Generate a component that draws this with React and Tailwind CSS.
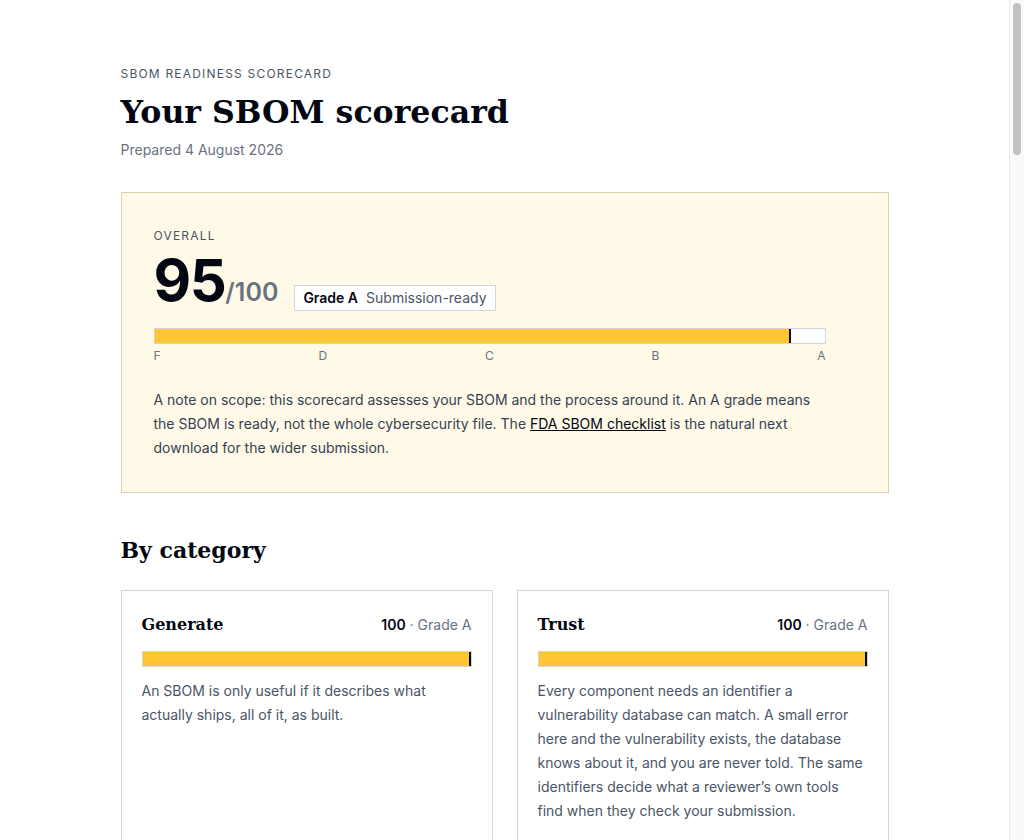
import React from 'react';

const serif = { fontFamily: '"DejaVu Serif", "Liberation Serif", serif' };

const categories = [
  {
    name: 'Generate',
    score: 100,
    grade: 'A',
    text: 'An SBOM is only useful if it describes what actually ships, all of it, as built.',
    checks: ['Generated from the build, not by hand', 'Covers every shipped artefact', 'Regenerated on each release'],
  },
  {
    name: 'Trust',
    score: 100,
    grade: 'A',
    text: 'Every component needs an identifier a vulnerability database can match. A small error here and the vulnerability exists, the database knows about it, and you are never told. The same identifiers decide what a reviewer\u2019s own tools find when they check your submission.',
    checks: ['PURL or CPE on every component', 'Supplier and version recorded', 'Hashes for shipped binaries'],
  },
  {
    name: 'Share',
    score: 90,
    grade: 'A',
    text: 'The SBOM has to reach the people who need it, in a format their tools can read, without a week of back and forth.',
    checks: ['SPDX or CycloneDX output', 'Machine-readable copy in the submission', 'Named owner for requests'],
  },
  {
    name: 'Maintain',
    score: 85,
    grade: 'B',
    text: 'A device stays on the market for years. The SBOM has to keep pace with patches, end-of-support dates and new vulnerabilities.',
    checks: ['Support status per component', 'Monitoring against known vulnerabilities', 'Review cadence documented'],
  },
];

const answers = [
  ['How is your SBOM produced?', 'Automatically, as part of the release build.', 'Generate'],
  ['Does it include firmware and third-party binaries?', 'Yes, every artefact that ships on the device.', 'Generate'],
  ['Is it regenerated when the software changes?', 'On every tagged release.', 'Generate'],
  ['Do components carry PURL or CPE identifiers?', 'Yes, for all components.', 'Trust'],
  ['Are supplier names and versions recorded?', 'Yes, checked against the build manifest.', 'Trust'],
  ['Are hashes included for shipped binaries?', 'SHA-256 for every binary.', 'Trust'],
  ['Which format do you deliver in?', 'CycloneDX JSON, with a human-readable export.', 'Share'],
  ['Who answers questions about the SBOM?', 'A named product security lead.', 'Share'],
  ['Is support status recorded per component?', 'For most components; some dates are missing.', 'Maintain'],
  ['Do you monitor components for new vulnerabilities?', 'Weekly, against NVD and OSV.', 'Maintain'],
  ['How often is the SBOM reviewed?', 'Quarterly, and before each submission.', 'Maintain'],
  ['Is the review process written down?', 'Partly; the cadence is documented, the owner is not.', 'Maintain'],
];

function Bar({ value }) {
  return (
    <div className="relative h-4 w-full border border-gray-300 bg-white">
      <div className="h-full bg-[#ffc533]" style={{ width: `${value}%` }} />
      <div className="absolute top-0 bottom-0 w-[2px] bg-gray-950" style={{ left: `calc(${value}% - 2px)` }} />
    </div>
  );
}

function CategoryCard({ c }) {
  return (
    <div className="flex flex-col border border-gray-300 bg-white p-5">
      <div className="flex items-center justify-between">
        <h3 className="text-base font-bold text-gray-950 leading-7" style={serif}>{c.name}</h3>
        <p className="text-sm text-gray-500">
          <span className="font-semibold text-gray-950">{c.score}</span> · Grade {c.grade}
        </p>
      </div>
      <div className="mt-3">
        <Bar value={c.score} />
      </div>
      <p className="mt-3 text-sm leading-6 text-gray-600">{c.text}</p>
      <div className="mt-auto pt-9">
        <ul className="space-y-2 border-t border-gray-200 pt-4">
          {c.checks.map((k) => (
            <li key={k} className="flex items-center gap-2 text-sm text-gray-700">
              <span className="text-[#b38600]">✓</span>
              {k}
            </li>
          ))}
        </ul>
      </div>
    </div>
  );
}

export default function App() {
  return (
    <div className="flex h-screen bg-white text-gray-950" style={{ fontFamily: 'Inter, "Liberation Sans", sans-serif' }}>
      <div className="flex-1 overflow-y-auto [scrollbar-width:none]">
        <main className="mx-auto max-w-3xl pt-[66px] pb-32">
          <p className="text-xs tracking-widest text-gray-600">SBOM READINESS SCORECARD</p>
          <h1 className="mt-2.5 text-[31.6px] font-bold leading-10 text-gray-950" style={serif}>
            Your SBOM scorecard
          </h1>
          <p className="mt-2 text-sm text-gray-500">Prepared 4 August 2026</p>

          <section className="mt-8 border border-[#d9d3a9] bg-[#fffae8] px-8 pt-[35px] pb-8">
            <div className="max-w-2xl">
              <p className="text-xs tracking-widest text-gray-600">OVERALL</p>
              <div className="mt-[7px] flex items-baseline gap-4">
                <p className="leading-none">
                  <span className="text-[58px] font-bold tracking-tight text-gray-950">95</span>
                  <span className="text-[25px] font-semibold text-gray-500">/100</span>
                </p>
                <span className="relative top-0.5 border border-gray-300 bg-white px-2 py-0.5 text-sm leading-5 text-gray-600">
                  <span className="font-semibold text-gray-950">Grade A</span>
                  <span className="ml-2">Submission-ready</span>
                </span>
              </div>
              <div className="mt-[19px]">
                <Bar value={95} />
                <div className="mt-1 flex justify-between text-xs text-gray-500">
                  <span>F</span>
                  <span>D</span>
                  <span>C</span>
                  <span>B</span>
                  <span>A</span>
                </div>
              </div>
              <p className="mt-6 text-sm leading-6 text-gray-700">
                A note on scope: this scorecard assesses your SBOM and the process around it. An A grade means the SBOM is ready, not the whole cybersecurity file. The{' '}
                <a href="#" className="text-gray-950 underline">FDA SBOM checklist</a> is the natural next download for the wider submission.
              </p>
            </div>
          </section>

          <h2 className="mt-[41px] text-[22px] font-bold leading-8 text-gray-950" style={serif}>By category</h2>
          <div className="mt-6 grid grid-cols-2 gap-6">
            {categories.map((c) => (
              <CategoryCard key={c.name} c={c} />
            ))}
          </div>

          <h2 className="mt-16 text-[22px] font-bold leading-8 text-gray-950" style={serif}>Your answers</h2>
          <p className="mt-2 text-sm leading-6 text-gray-600">What you told us, question by question, and where each answer counts.</p>
          <div className="mt-6 divide-y divide-gray-200 border-y border-gray-300">
            {answers.map(([q, a, cat]) => (
              <div key={q} className="flex items-start justify-between gap-6 py-5">
                <div>
                  <p className="text-sm font-semibold text-gray-950">{q}</p>
                  <p className="mt-1 text-sm leading-6 text-gray-600">{a}</p>
                </div>
                <span className="shrink-0 border border-gray-300 px-2 py-0.5 text-xs text-gray-600">{cat}</span>
              </div>
            ))}
          </div>

          <h2 className="mt-16 text-[22px] font-bold leading-8 text-gray-950" style={serif}>What to do next</h2>
          <div className="mt-6 space-y-4">
            {[
              'Keep the SBOM under version control next to the build that produced it.',
              'Add end-of-support dates for the components still missing them.',
              'Write down who owns the SBOM review, not only how often it happens.',
              'Download the FDA SBOM checklist and work through the wider submission.',
            ].map((t, i) => (
              <div key={t} className="flex gap-4 border border-gray-300 p-5">
                <span className="text-base font-bold leading-6 text-gray-950" style={serif}>{i + 1}</span>
                <p className="text-sm leading-6 text-gray-700">{t}</p>
              </div>
            ))}
          </div>

          <div className="mt-16 border border-[#d9d3a9] bg-[#fffae8] p-8">
            <h2 className="text-[22px] font-bold leading-8 text-gray-950" style={serif}>Take it further</h2>
            <p className="mt-3 max-w-2xl text-sm leading-6 text-gray-700">
              The <a href="#" className="text-gray-950 underline">FDA SBOM checklist</a> walks through every item a reviewer expects to see alongside the SBOM itself, from threat modelling to the update plan.
            </p>
          </div>

          <p className="mt-16 text-xs text-gray-500">This scorecard is guidance only and does not replace a regulatory review.</p>
        </main>
      </div>

      {/* scrollbar track, as the page shows it */}
      <div className="w-[15px] shrink-0 border-l border-[#e8e8e8] bg-[#fafafa] pt-[3px]">
        <div className="mx-auto h-[152px] w-2 rounded-full bg-[#c1c1c1]" />
      </div>
    </div>
  );
}
